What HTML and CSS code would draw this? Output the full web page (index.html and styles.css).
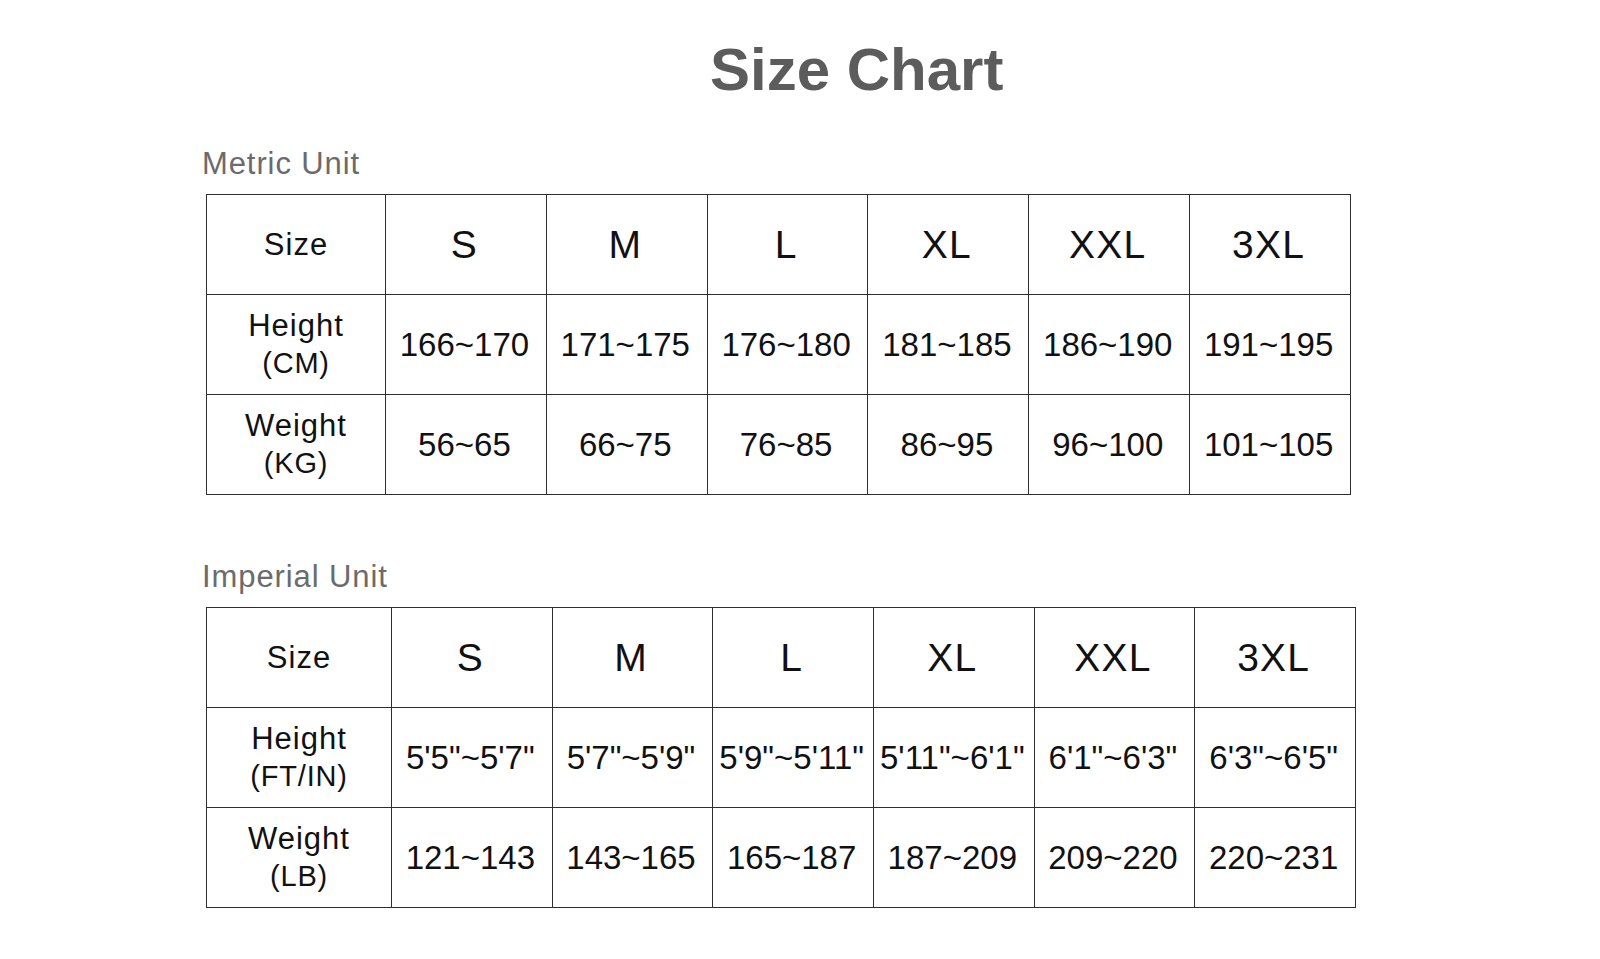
FILE: index.html
```html
<!DOCTYPE html>
<html>
<head>
<meta charset="utf-8">
<title>Size Chart</title>
<link rel="stylesheet" href="styles.css">
</head>
<body>
<main class="page">
  <h1 class="title">Size Chart</h1>

  <section class="unit unit-metric">
    <h2 class="unit-label">Metric Unit</h2>
    <table class="chart chart-metric">
      <colgroup><col class="col-head"><col><col><col><col><col><col></colgroup>
      <tr class="row-size">
        <th class="rh">Size</th><td>S</td><td>M</td><td>L</td><td>XL</td><td>XXL</td><td>3XL</td>
      </tr>
      <tr>
        <th class="rh">Height<br><span class="sub">(CM)</span></th>
        <td>166~170</td><td>171~175</td><td>176~180</td><td>181~185</td><td>186~190</td><td>191~195</td>
      </tr>
      <tr>
        <th class="rh">Weight<br><span class="sub">(KG)</span></th>
        <td>56~65</td><td>66~75</td><td>76~85</td><td>86~95</td><td>96~100</td><td>101~105</td>
      </tr>
    </table>
  </section>

  <section class="unit unit-imperial">
    <h2 class="unit-label">Imperial Unit</h2>
    <table class="chart chart-imperial">
      <colgroup><col class="col-head"><col><col><col><col><col><col></colgroup>
      <tr class="row-size">
        <th class="rh">Size</th><td>S</td><td>M</td><td>L</td><td>XL</td><td>XXL</td><td>3XL</td>
      </tr>
      <tr>
        <th class="rh">Height<br><span class="sub">(FT/IN)</span></th>
        <td>5'5"~5'7"</td><td>5'7"~5'9"</td><td>5'9"~5'11"</td><td>5'11"~6'1"</td><td>6'1"~6'3"</td><td>6'3"~6'5"</td>
      </tr>
      <tr>
        <th class="rh">Weight<br><span class="sub">(LB)</span></th>
        <td>121~143</td><td>143~165</td><td>165~187</td><td>187~209</td><td>209~220</td><td>220~231</td>
      </tr>
    </table>
  </section>
</main>
</body>
</html>
```

FILE: styles.css
```css
html, body {
  margin: 0;
  padding: 0;
  background: #ffffff;
}

body {
  font-family: "Liberation Sans", Arial, sans-serif;
  color: #111111;
}

.page {
  padding: 40px 0 0 206px;
}

.title {
  margin: 0;
  padding-left: 504px;
  font-size: 60px;
  line-height: 60px;
  font-weight: bold;
  color: #5c5c5c;
}

.unit-metric {
  margin-top: 46px;
}

.unit-imperial {
  margin-top: 64px;
}

.unit-label {
  margin: 0 0 12px -4px;
  font-size: 31px;
  line-height: 36px;
  font-weight: normal;
  letter-spacing: 0.9px;
  color: #6b6b6b;
}

.chart {
  border-collapse: collapse;
  table-layout: fixed;
}

.chart-metric {
  width: 1145px;
}

.chart-metric .col-head {
  width: 179px;
}

.chart-imperial {
  width: 1150px;
}

.chart-imperial .col-head {
  width: 185px;
}

.chart tr {
  height: 100px;
}

.chart th,
.chart td {
  border: 1px solid #2e2e2e;
  padding: 0;
  text-align: center;
  vertical-align: middle;
  white-space: nowrap;
  color: #111111;
}

.chart td {
  font-size: 33px;
  line-height: 36px;
  padding-right: 3px;
}

.chart .rh {
  font-weight: normal;
  font-size: 31px;
  line-height: 37px;
  letter-spacing: 1px;
}

.chart .row-size td {
  font-size: 39px;
  letter-spacing: 1.2px;
}

.chart .sub {
  font-size: 29px;
  letter-spacing: 0.8px;
}
```
